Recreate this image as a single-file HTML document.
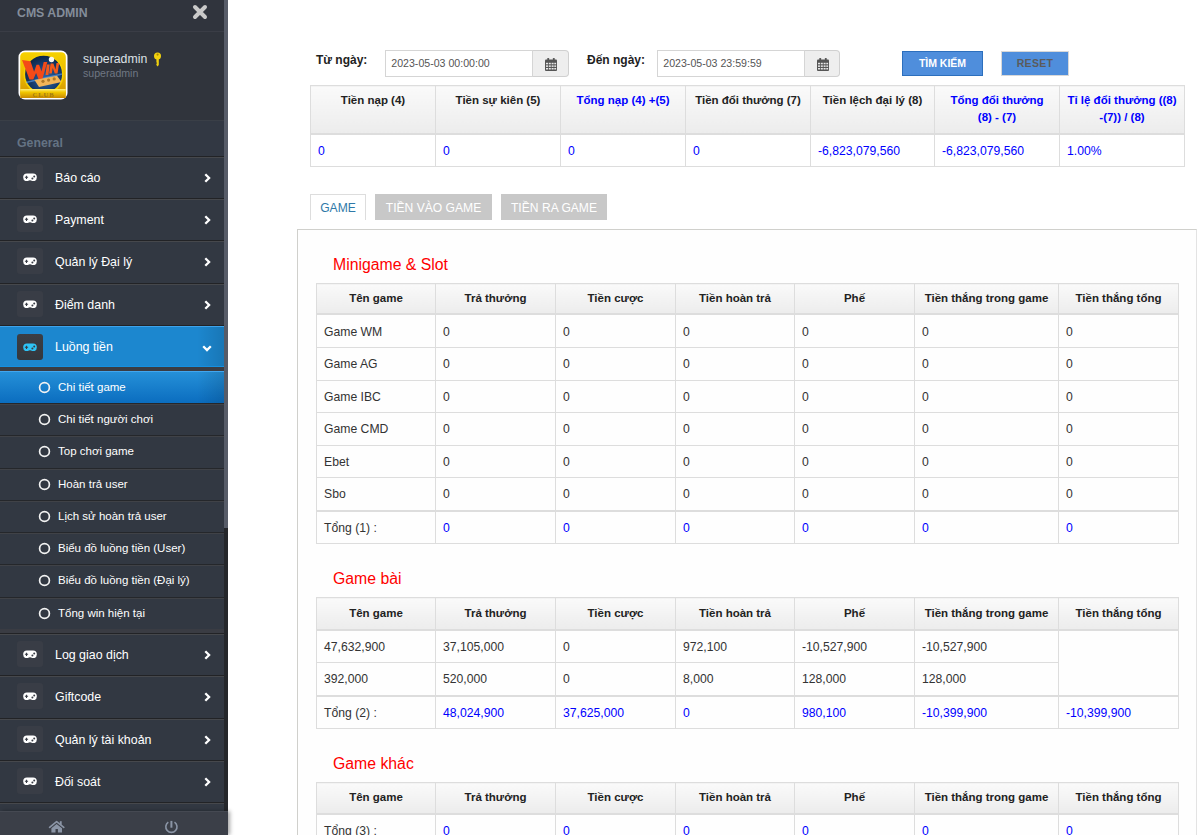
<!DOCTYPE html><html><head><meta charset="utf-8"><style>
*{box-sizing:border-box;margin:0;padding:0}
html,body{width:1200px;height:835px;overflow:hidden;background:#fff;font-family:"Liberation Sans", sans-serif;position:relative}
.side{position:absolute;left:0;top:0;width:224px;height:835px;background:#323842;overflow:hidden}
.hdr{position:absolute;left:0;top:0;width:224px;height:32px;background:#30343d;border-bottom:1px solid #3a3d46}
.brand{position:absolute;left:17px;top:5px;font-size:12.3px;font-weight:bold;color:#848d9a;line-height:16px}
.xic{position:absolute;left:192px;top:4px}
.prof{position:absolute;left:0;top:32px;width:224px;height:88px;background:#30343c}
.logo{position:absolute;left:18px;top:50px}
.uname{position:absolute;left:83px;top:50.6px;font-size:12.3px;color:#dde1e6;line-height:16px}
.key{position:absolute;left:153px;top:52px}
.usub{position:absolute;left:83px;top:66px;font-size:10.6px;color:#6f7783;line-height:14px}
.gen{position:absolute;left:0;top:120px;width:224px;height:36px;background:#323843;border-top:1px solid #3a3f47}
.genl{position:absolute;left:17px;top:14px;font-size:12.3px;font-weight:bold;color:#647383;line-height:16px}
.mi{position:absolute;left:0;width:224px;background:#323842;border-top:1px solid #222326;box-shadow:inset 0 1px 0 #46484c}
.mi .ib{position:absolute;left:17px;top:7px;width:26px;height:26px;border-radius:3px;background:#393d46}
.mi .ib svg{position:absolute;left:6px;top:8px}
.ml{position:absolute;left:55px;top:13px;font-size:12.4px;color:#fff;line-height:16px;white-space:nowrap}
.chev{position:absolute;left:204px;top:16px;line-height:0}
.chevd{left:201.7px;top:18.5px}
.act{background:linear-gradient(to right,rgba(0,0,0,0) 88%,rgba(0,0,0,.12)),#1c87cf;box-shadow:inset 0 1px 0 #3fa3ea,inset 0 -1px 0 #1590e0}
.ibact{background:linear-gradient(#3b3e45,#34373d) !important;top:8px !important}
.subwrap{position:absolute;left:0;width:224px;background:#3a3c43}
.si{position:absolute;left:0;width:224px;background:#323842;border-top:1px solid #25272b;box-shadow:inset 0 1px 0 #404247}
.sact{background:linear-gradient(to right,rgba(0,0,0,0) 88%,rgba(0,0,0,.12)),linear-gradient(#2590d8,#0b6dbf);border-top:1px solid #42a6ee;box-shadow:none}
.ring{position:absolute;left:37.7px;top:9px}
.sl{position:absolute;left:58px;top:7px;font-size:11.5px;color:#fff;line-height:16px;white-space:nowrap}
.foot{position:absolute;left:0;top:811px;width:228px;height:24px;background:#3b3f48;border-top:1px solid #454952;box-shadow:2px 0 4px rgba(0,0,0,.35)}
.home{position:absolute;left:48px;top:820px}
.pwr{position:absolute;left:164px;top:819px}
.sb-thumb{position:absolute;left:224px;top:0;width:4px;height:528px;background:#575c68}
.sb-track{position:absolute;left:224px;top:528px;width:4px;height:283px;background:#25272b}
.flab{position:absolute;top:52px;font-size:12px;font-weight:bold;color:#222;line-height:16px}
.inp{position:absolute;top:50px;width:148px;height:27px;border:1px solid #d5d5d5;background:#fff}
.inp span{position:absolute;left:5.3px;top:5px;font-size:10.6px;color:#555;line-height:14px;white-space:nowrap}
.addon{position:absolute;top:50px;width:36px;height:27px;border:1px solid #d0d0d0;border-left:none;border-radius:0 4px 4px 0;background:#eee}
.addon svg{position:absolute;left:11.7px;top:7px}
.btn{position:absolute;top:51px;height:25px;font-size:10.5px;font-weight:bold;text-align:center;line-height:23px;background:#4f8edc}
.b1{left:902px;width:81px;color:#fff;border:1px solid #2c6fbd}
.b2{left:1001px;width:68px;color:#5b5b5b;border:1px solid #d8d8d8;letter-spacing:0.3px}
.tb{position:absolute;border-collapse:collapse;table-layout:fixed}
.tb th,.tb td{border:1px solid #ddd;font-size:12.2px;line-height:17px;padding:0 8px;text-align:left;color:#333;white-space:nowrap;overflow:hidden}
.tb th{font-weight:bold;font-size:11.5px;text-align:center;color:#222;background:linear-gradient(#fafafa,#ececec);border-bottom:2px solid #ddd;vertical-align:top}
.sum th{padding:6px 2px 0 2px}
.gt th{vertical-align:middle}
.gt td{vertical-align:top;padding:8px 7px 0 7px}
.mg tr:nth-child(2) td{padding-top:9px}
.sum td{vertical-align:top;padding:8px 8px 0 7px}
.tb .bl{color:#00f}
.tot td{border-top:2px solid #ddd;padding-top:8px !important}
.tab{position:absolute;top:194px;height:26px;font-size:12.1px;line-height:27px;text-align:center}
.t1{left:310px;width:56px;border:1px solid #ddd;border-bottom:none;color:#2f79a8;background:#fff}
.t2{left:375px;width:117px;background:#c8c8c8;color:#fff;padding-top:1px}
.t3{left:501px;width:106px;background:#c8c8c8;color:#fff;padding-top:1px}
.panel{position:absolute;left:297px;top:229px;width:900px;height:700px;border:1px solid #d0d0cc;border-right-color:#e3e3e3;border-bottom:none;background:#fefefe}
.sect{position:absolute;left:333px;font-size:15.8px;color:#f00;line-height:20px}
</style></head><body>
<div class="side"><div class="hdr"></div><div class="brand">CMS ADMIN</div><svg class="xic" width="16" height="16" viewBox="0 0 16 16"><path d="M3 3l10 10M13 3L3 13" stroke="#c9c9c9" stroke-width="4" stroke-linecap="round"/></svg><div class="prof"></div><svg class="logo" width="50" height="50" viewBox="0 0 50 50">
<defs><linearGradient id="gg" x1="0" y1="0" x2="0" y2="1"><stop offset="0" stop-color="#f6d200"/><stop offset="0.5" stop-color="#eab800"/><stop offset="1" stop-color="#d09200"/></linearGradient>
<linearGradient id="gb" x1="0" y1="0" x2="0" y2="1"><stop offset="0" stop-color="#fff07a"/><stop offset="0.35" stop-color="#f2c800"/><stop offset="1" stop-color="#c88800"/></linearGradient>
<radialGradient id="bl" cx="0.55" cy="0.6" r="0.6"><stop offset="0" stop-color="#2d66a8"/><stop offset="0.6" stop-color="#163c6e"/><stop offset="1" stop-color="#0b2444"/></radialGradient></defs>
<rect x="0.5" y="0.5" width="49" height="49" rx="6.5" fill="#fff"/>
<rect x="2.2" y="2.2" width="45.6" height="45.6" rx="4.5" fill="url(#gg)"/>
<circle cx="25.6" cy="24.2" r="19.3" fill="url(#bl)" stroke="#f7d000" stroke-width="1.6"/>
<path d="M8 32.5L44 24" stroke="#6ab0ff" stroke-width="1.4" opacity="0.55"/>
<path d="M4 10l8.5 1.2 3.6 10.5 2.4-7h2.6l2.4 6.8 2.2-9.5h3.6l-5 17.5h-3.6l-2.6-6.6-2.8 6.6h-3.8z" fill="#f44a18"/>
<path d="M28.8 14.5h2.9l-1.3 10.5h-2.9zM32.6 13.5h2.8l2.1 6 1-6.5h2.7l-1.7 10.5h-2.7l-2.1-5.6-0.9 5.6h-2.7z" fill="#f65a1a"/>
<path d="M16.5 30l22.5-4.2 4.6 6.3-22.6 4.8z" fill="#f2b458"/>
<g fill="#9a6418" opacity="0.75"><circle cx="25" cy="31.3" r="1.6"/><circle cx="30.6" cy="30.1" r="1.6"/><circle cx="36.2" cy="28.9" r="1.6"/></g>
<circle cx="33.5" cy="9.5" r="2.7" fill="#f8f8f0"/>
<rect x="2.2" y="39" width="45.6" height="9" fill="url(#gb)"/>
<text x="25.5" y="46.6" font-family="Liberation Serif" font-size="6.6" font-weight="bold" fill="#a27a10" text-anchor="middle" letter-spacing="0.9">CLUB</text>
</svg><div class="uname">superadmin</div><svg class="key" width="9" height="15" viewBox="0 0 9 15"><circle cx="4.5" cy="3.9" r="3.5" fill="#f2d20e"/><circle cx="4.6" cy="2.6" r="1.1" fill="#b08800"/><path d="M3.4 6.6h2.4v6.4l-1.2 1.5-1.2-1.5v-1.2l0.9-0.7-0.9-0.7z" fill="#f2d20e"/></svg><div class="usub">superadmin</div><div class="gen"><div class="genl">General</div></div><div class="mi" style="top:156px;height:42px"><div class="ib"><svg width="14" height="9" viewBox="0 0 14 9"><path d="M4 1.5H10A3.85 3.85 0 0 1 10 9.2C8.8 9.2 8.2 8.3 7 8.3S5.2 9.2 4 9.2A3.85 3.85 0 0 1 4 1.5Z" fill="#fff"/><path d="M1.9 5.3H5.1M3.5 3.7V6.9" stroke="#393d46" stroke-width="1.1"/><circle cx="11.2" cy="4.4" r="1" fill="#393d46"/><circle cx="9.4" cy="6.4" r="1" fill="#393d46"/></svg></div><div class="ml">Báo cáo</div><div class="chev"><svg width="7" height="10" viewBox="0 0 7 10"><path d="M1.3 1.2l3.8 3.8-3.8 3.8" fill="none" stroke="#fff" stroke-width="2.3"/></svg></div></div><div class="mi" style="top:198px;height:42px"><div class="ib"><svg width="14" height="9" viewBox="0 0 14 9"><path d="M4 1.5H10A3.85 3.85 0 0 1 10 9.2C8.8 9.2 8.2 8.3 7 8.3S5.2 9.2 4 9.2A3.85 3.85 0 0 1 4 1.5Z" fill="#fff"/><path d="M1.9 5.3H5.1M3.5 3.7V6.9" stroke="#393d46" stroke-width="1.1"/><circle cx="11.2" cy="4.4" r="1" fill="#393d46"/><circle cx="9.4" cy="6.4" r="1" fill="#393d46"/></svg></div><div class="ml">Payment</div><div class="chev"><svg width="7" height="10" viewBox="0 0 7 10"><path d="M1.3 1.2l3.8 3.8-3.8 3.8" fill="none" stroke="#fff" stroke-width="2.3"/></svg></div></div><div class="mi" style="top:240px;height:43px"><div class="ib"><svg width="14" height="9" viewBox="0 0 14 9"><path d="M4 1.5H10A3.85 3.85 0 0 1 10 9.2C8.8 9.2 8.2 8.3 7 8.3S5.2 9.2 4 9.2A3.85 3.85 0 0 1 4 1.5Z" fill="#fff"/><path d="M1.9 5.3H5.1M3.5 3.7V6.9" stroke="#393d46" stroke-width="1.1"/><circle cx="11.2" cy="4.4" r="1" fill="#393d46"/><circle cx="9.4" cy="6.4" r="1" fill="#393d46"/></svg></div><div class="ml">Quản lý Đại lý</div><div class="chev"><svg width="7" height="10" viewBox="0 0 7 10"><path d="M1.3 1.2l3.8 3.8-3.8 3.8" fill="none" stroke="#fff" stroke-width="2.3"/></svg></div></div><div class="mi" style="top:283px;height:42px"><div class="ib"><svg width="14" height="9" viewBox="0 0 14 9"><path d="M4 1.5H10A3.85 3.85 0 0 1 10 9.2C8.8 9.2 8.2 8.3 7 8.3S5.2 9.2 4 9.2A3.85 3.85 0 0 1 4 1.5Z" fill="#fff"/><path d="M1.9 5.3H5.1M3.5 3.7V6.9" stroke="#393d46" stroke-width="1.1"/><circle cx="11.2" cy="4.4" r="1" fill="#393d46"/><circle cx="9.4" cy="6.4" r="1" fill="#393d46"/></svg></div><div class="ml">Điểm danh</div><div class="chev"><svg width="7" height="10" viewBox="0 0 7 10"><path d="M1.3 1.2l3.8 3.8-3.8 3.8" fill="none" stroke="#fff" stroke-width="2.3"/></svg></div></div><div class="mi act" style="top:325px;height:42px"><div class="ib ibact"><svg width="14" height="9" viewBox="0 0 14 9"><path d="M4 1.5H10A3.85 3.85 0 0 1 10 9.2C8.8 9.2 8.2 8.3 7 8.3S5.2 9.2 4 9.2A3.85 3.85 0 0 1 4 1.5Z" fill="#2ec4f6"/><path d="M1.9 5.3H5.1M3.5 3.7V6.9" stroke="#383b42" stroke-width="1.1"/><circle cx="11.2" cy="4.4" r="1" fill="#383b42"/><circle cx="9.4" cy="6.4" r="1" fill="#383b42"/></svg></div><div class="ml">Luồng tiền</div><div class="chev chevd"><svg width="10" height="7" viewBox="0 0 10 7"><path d="M1.2 1.3l3.8 3.8 3.8-3.8" fill="none" stroke="#fff" stroke-width="2.3"/></svg></div></div><div class="subwrap" style="top:367px;height:266px"></div><div class="si sact" style="top:371px;height:32px"><svg class="ring" width="13" height="13" viewBox="0 0 13 13"><circle cx="6.5" cy="6.5" r="4.9" fill="none" stroke="#f2f2f2" stroke-width="1.7"/></svg><div class="sl">Chi tiết game</div></div><div class="si" style="top:403px;height:32px"><svg class="ring" width="13" height="13" viewBox="0 0 13 13"><circle cx="6.5" cy="6.5" r="4.9" fill="none" stroke="#f2f2f2" stroke-width="1.7"/></svg><div class="sl">Chi tiết người chơi</div></div><div class="si" style="top:435px;height:33px"><svg class="ring" width="13" height="13" viewBox="0 0 13 13"><circle cx="6.5" cy="6.5" r="4.9" fill="none" stroke="#f2f2f2" stroke-width="1.7"/></svg><div class="sl">Top chơi game</div></div><div class="si" style="top:468px;height:32px"><svg class="ring" width="13" height="13" viewBox="0 0 13 13"><circle cx="6.5" cy="6.5" r="4.9" fill="none" stroke="#f2f2f2" stroke-width="1.7"/></svg><div class="sl">Hoàn trả user</div></div><div class="si" style="top:500px;height:32px"><svg class="ring" width="13" height="13" viewBox="0 0 13 13"><circle cx="6.5" cy="6.5" r="4.9" fill="none" stroke="#f2f2f2" stroke-width="1.7"/></svg><div class="sl">Lịch sử hoàn trả user</div></div><div class="si" style="top:532px;height:32px"><svg class="ring" width="13" height="13" viewBox="0 0 13 13"><circle cx="6.5" cy="6.5" r="4.9" fill="none" stroke="#f2f2f2" stroke-width="1.7"/></svg><div class="sl">Biểu đồ luồng tiền (User)</div></div><div class="si" style="top:564px;height:33px"><svg class="ring" width="13" height="13" viewBox="0 0 13 13"><circle cx="6.5" cy="6.5" r="4.9" fill="none" stroke="#f2f2f2" stroke-width="1.7"/></svg><div class="sl">Biểu đồ luồng tiền (Đại lý)</div></div><div class="si" style="top:597px;height:32px"><svg class="ring" width="13" height="13" viewBox="0 0 13 13"><circle cx="6.5" cy="6.5" r="4.9" fill="none" stroke="#f2f2f2" stroke-width="1.7"/></svg><div class="sl">Tổng win hiện tại</div></div><div class="mi" style="top:633px;height:42px"><div class="ib"><svg width="14" height="9" viewBox="0 0 14 9"><path d="M4 1.5H10A3.85 3.85 0 0 1 10 9.2C8.8 9.2 8.2 8.3 7 8.3S5.2 9.2 4 9.2A3.85 3.85 0 0 1 4 1.5Z" fill="#fff"/><path d="M1.9 5.3H5.1M3.5 3.7V6.9" stroke="#393d46" stroke-width="1.1"/><circle cx="11.2" cy="4.4" r="1" fill="#393d46"/><circle cx="9.4" cy="6.4" r="1" fill="#393d46"/></svg></div><div class="ml">Log giao dịch</div><div class="chev"><svg width="7" height="10" viewBox="0 0 7 10"><path d="M1.3 1.2l3.8 3.8-3.8 3.8" fill="none" stroke="#fff" stroke-width="2.3"/></svg></div></div><div class="mi" style="top:675px;height:43px"><div class="ib"><svg width="14" height="9" viewBox="0 0 14 9"><path d="M4 1.5H10A3.85 3.85 0 0 1 10 9.2C8.8 9.2 8.2 8.3 7 8.3S5.2 9.2 4 9.2A3.85 3.85 0 0 1 4 1.5Z" fill="#fff"/><path d="M1.9 5.3H5.1M3.5 3.7V6.9" stroke="#393d46" stroke-width="1.1"/><circle cx="11.2" cy="4.4" r="1" fill="#393d46"/><circle cx="9.4" cy="6.4" r="1" fill="#393d46"/></svg></div><div class="ml">Giftcode</div><div class="chev"><svg width="7" height="10" viewBox="0 0 7 10"><path d="M1.3 1.2l3.8 3.8-3.8 3.8" fill="none" stroke="#fff" stroke-width="2.3"/></svg></div></div><div class="mi" style="top:718px;height:42px"><div class="ib"><svg width="14" height="9" viewBox="0 0 14 9"><path d="M4 1.5H10A3.85 3.85 0 0 1 10 9.2C8.8 9.2 8.2 8.3 7 8.3S5.2 9.2 4 9.2A3.85 3.85 0 0 1 4 1.5Z" fill="#fff"/><path d="M1.9 5.3H5.1M3.5 3.7V6.9" stroke="#393d46" stroke-width="1.1"/><circle cx="11.2" cy="4.4" r="1" fill="#393d46"/><circle cx="9.4" cy="6.4" r="1" fill="#393d46"/></svg></div><div class="ml">Quản lý tài khoản</div><div class="chev"><svg width="7" height="10" viewBox="0 0 7 10"><path d="M1.3 1.2l3.8 3.8-3.8 3.8" fill="none" stroke="#fff" stroke-width="2.3"/></svg></div></div><div class="mi" style="top:760px;height:42px"><div class="ib"><svg width="14" height="9" viewBox="0 0 14 9"><path d="M4 1.5H10A3.85 3.85 0 0 1 10 9.2C8.8 9.2 8.2 8.3 7 8.3S5.2 9.2 4 9.2A3.85 3.85 0 0 1 4 1.5Z" fill="#fff"/><path d="M1.9 5.3H5.1M3.5 3.7V6.9" stroke="#393d46" stroke-width="1.1"/><circle cx="11.2" cy="4.4" r="1" fill="#393d46"/><circle cx="9.4" cy="6.4" r="1" fill="#393d46"/></svg></div><div class="ml">Đối soát</div><div class="chev"><svg width="7" height="10" viewBox="0 0 7 10"><path d="M1.3 1.2l3.8 3.8-3.8 3.8" fill="none" stroke="#fff" stroke-width="2.3"/></svg></div></div><div class="mi" style="top:802px;height:10px"></div></div><div class="sb-thumb"></div><div class="sb-track"></div><div class="foot"></div><svg class="home" width="17" height="14" viewBox="0 0 17 14"><path d="M1.6 7.3L8.6 1.7l7.2 5.6" fill="none" stroke="#8b95a6" stroke-width="1.7" stroke-linecap="round" stroke-linejoin="round"/><path d="M3.4 8.2L8.6 4l5.4 4.2v4.4H9.9V8.9H7.5v3.7H3.4z" fill="#8b95a6"/><rect x="11.8" y="1.2" width="1.9" height="3.6" fill="#8b95a6"/></svg><svg class="pwr" width="15" height="15" viewBox="0 0 15 15"><path d="M4.3 3.1A5.6 5.6 0 1 0 10.5 3.1" fill="none" stroke="#8b95a6" stroke-width="1.6"/><path d="M7.4 1.9v6.8" stroke="#8b95a6" stroke-width="2"/></svg>
<div class="flab" style="left:316px">Từ ngày:</div><div class="inp" style="left:385px"><span>2023-05-03 00:00:00</span></div><div class="addon" style="left:533px"><svg width="12" height="13" viewBox="0 0 12 13"><rect x="0" y="1.5" width="12" height="11.5" rx="1" fill="#555"/><rect x="2.3" y="0" width="1.8" height="3" rx=".5" fill="#555"/><rect x="7.9" y="0" width="1.8" height="3" rx=".5" fill="#555"/><g fill="#e8e8e8"><rect x="1" y="4.8" width="2" height="1.5"/><rect x="3.8" y="4.8" width="2" height="1.5"/><rect x="6.6" y="4.8" width="2" height="1.5"/><rect x="9.3" y="4.8" width="1.8" height="1.5"/><rect x="1" y="7.4" width="2" height="1.5"/><rect x="3.8" y="7.4" width="2" height="1.5"/><rect x="6.6" y="7.4" width="2" height="1.5"/><rect x="9.3" y="7.4" width="1.8" height="1.5"/><rect x="1" y="10" width="2" height="1.5"/><rect x="3.8" y="10" width="2" height="1.5"/><rect x="6.6" y="10" width="2" height="1.5"/><rect x="9.3" y="10" width="1.8" height="1.5"/></g></svg></div><div class="flab" style="left:587px">Đến ngày:</div><div class="inp" style="left:657px"><span>2023-05-03 23:59:59</span></div><div class="addon" style="left:805px;width:35px"><svg width="12" height="13" viewBox="0 0 12 13"><rect x="0" y="1.5" width="12" height="11.5" rx="1" fill="#555"/><rect x="2.3" y="0" width="1.8" height="3" rx=".5" fill="#555"/><rect x="7.9" y="0" width="1.8" height="3" rx=".5" fill="#555"/><g fill="#e8e8e8"><rect x="1" y="4.8" width="2" height="1.5"/><rect x="3.8" y="4.8" width="2" height="1.5"/><rect x="6.6" y="4.8" width="2" height="1.5"/><rect x="9.3" y="4.8" width="1.8" height="1.5"/><rect x="1" y="7.4" width="2" height="1.5"/><rect x="3.8" y="7.4" width="2" height="1.5"/><rect x="6.6" y="7.4" width="2" height="1.5"/><rect x="9.3" y="7.4" width="1.8" height="1.5"/><rect x="1" y="10" width="2" height="1.5"/><rect x="3.8" y="10" width="2" height="1.5"/><rect x="6.6" y="10" width="2" height="1.5"/><rect x="9.3" y="10" width="1.8" height="1.5"/></g></svg></div><div class="btn b1">TÌM KIẾM</div><div class="btn b2">RESET</div><table class="tb sum" style="left:310px;top:85px;width:875px"><colgroup><col style="width:125px"><col style="width:125px"><col style="width:125px"><col style="width:125px"><col style="width:124px"><col style="width:125px"><col style="width:125px"></colgroup><tr class="th" style="height:48px"><th class="">Tiền nạp (4)</th><th class="">Tiền sự kiên (5)</th><th class="bl">Tổng nạp (4) +(5)</th><th class="">Tiền đổi thưởng (7)</th><th class="">Tiền lệch đại lý (8)</th><th class="bl">Tổng đổi thưởng<br>(8) - (7)</th><th class="bl">Tỉ lệ đổi thưởng ((8)<br>-(7)) / (8)</th></tr><tr style="height:33px"><td class="bl">0</td><td class="bl">0</td><td class="bl">0</td><td class="bl">0</td><td class="bl">-6,823,079,560</td><td class="bl">-6,823,079,560</td><td class="bl">1.00%</td></tr></table><div class="tab t1">GAME</div><div class="tab t2">TIỀN VÀO GAME</div><div class="tab t3">TIỀN RA GAME</div><div class="panel"></div><div class="sect" style="top:255px">Minigame &amp; Slot</div><table class="tb gt mg" style="left:316px;top:283px;width:863px"><colgroup><col style="width:119px"><col style="width:120px"><col style="width:120px"><col style="width:119px"><col style="width:120px"><col style="width:144px"><col style="width:120px"></colgroup><tr class="th" style="height:30px"><th>Tên game</th><th>Trả thưởng</th><th>Tiền cược</th><th>Tiền hoàn trả</th><th>Phế</th><th>Tiền thắng trong game</th><th>Tiền thắng tổng</th></tr><tr style="height:34px"><td>Game WM</td><td>0</td><td>0</td><td>0</td><td>0</td><td>0</td><td>0</td></tr><tr style="height:33px"><td>Game AG</td><td>0</td><td>0</td><td>0</td><td>0</td><td>0</td><td>0</td></tr><tr style="height:32px"><td>Game IBC</td><td>0</td><td>0</td><td>0</td><td>0</td><td>0</td><td>0</td></tr><tr style="height:33px"><td>Game CMD</td><td>0</td><td>0</td><td>0</td><td>0</td><td>0</td><td>0</td></tr><tr style="height:32px"><td>Ebet</td><td>0</td><td>0</td><td>0</td><td>0</td><td>0</td><td>0</td></tr><tr style="height:33px"><td>Sbo</td><td>0</td><td>0</td><td>0</td><td>0</td><td>0</td><td>0</td></tr><tr class="tot" style="height:33px"><td class="">Tổng (1) :</td><td class="bl">0</td><td class="bl">0</td><td class="bl">0</td><td class="bl">0</td><td class="bl">0</td><td class="bl">0</td></tr></table><div class="sect" style="top:569px">Game bài</div><table class="tb gt" style="left:316px;top:597px;width:863px"><colgroup><col style="width:119px"><col style="width:120px"><col style="width:120px"><col style="width:119px"><col style="width:120px"><col style="width:144px"><col style="width:120px"></colgroup><tr class="th" style="height:32px"><th>Tên game</th><th>Trả thưởng</th><th>Tiền cược</th><th>Tiền hoàn trả</th><th>Phế</th><th>Tiền thắng trong game</th><th>Tiền thắng tổng</th></tr><tr style="height:33px"><td>47,632,900</td><td>37,105,000</td><td>0</td><td>972,100</td><td>-10,527,900</td><td>-10,527,900</td><td rowspan="2"></td></tr><tr style="height:33px"><td>392,000</td><td>520,000</td><td>0</td><td>8,000</td><td>128,000</td><td>128,000</td></tr><tr class="tot" style="height:33px"><td>Tổng (2) :</td><td class="bl">48,024,900</td><td class="bl">37,625,000</td><td class="bl">0</td><td class="bl">980,100</td><td class="bl">-10,399,900</td><td class="bl">-10,399,900</td></tr></table><div class="sect" style="top:754px">Game khác</div><table class="tb gt " style="left:316px;top:782px;width:863px"><colgroup><col style="width:119px"><col style="width:120px"><col style="width:120px"><col style="width:119px"><col style="width:120px"><col style="width:144px"><col style="width:120px"></colgroup><tr class="th" style="height:31px"><th>Tên game</th><th>Trả thưởng</th><th>Tiền cược</th><th>Tiền hoàn trả</th><th>Phế</th><th>Tiền thắng trong game</th><th>Tiền thắng tổng</th></tr><tr class="tot" style="height:33px"><td class="">Tổng (3) :</td><td class="bl">0</td><td class="bl">0</td><td class="bl">0</td><td class="bl">0</td><td class="bl">0</td><td class="bl">0</td></tr></table>
</body></html>
